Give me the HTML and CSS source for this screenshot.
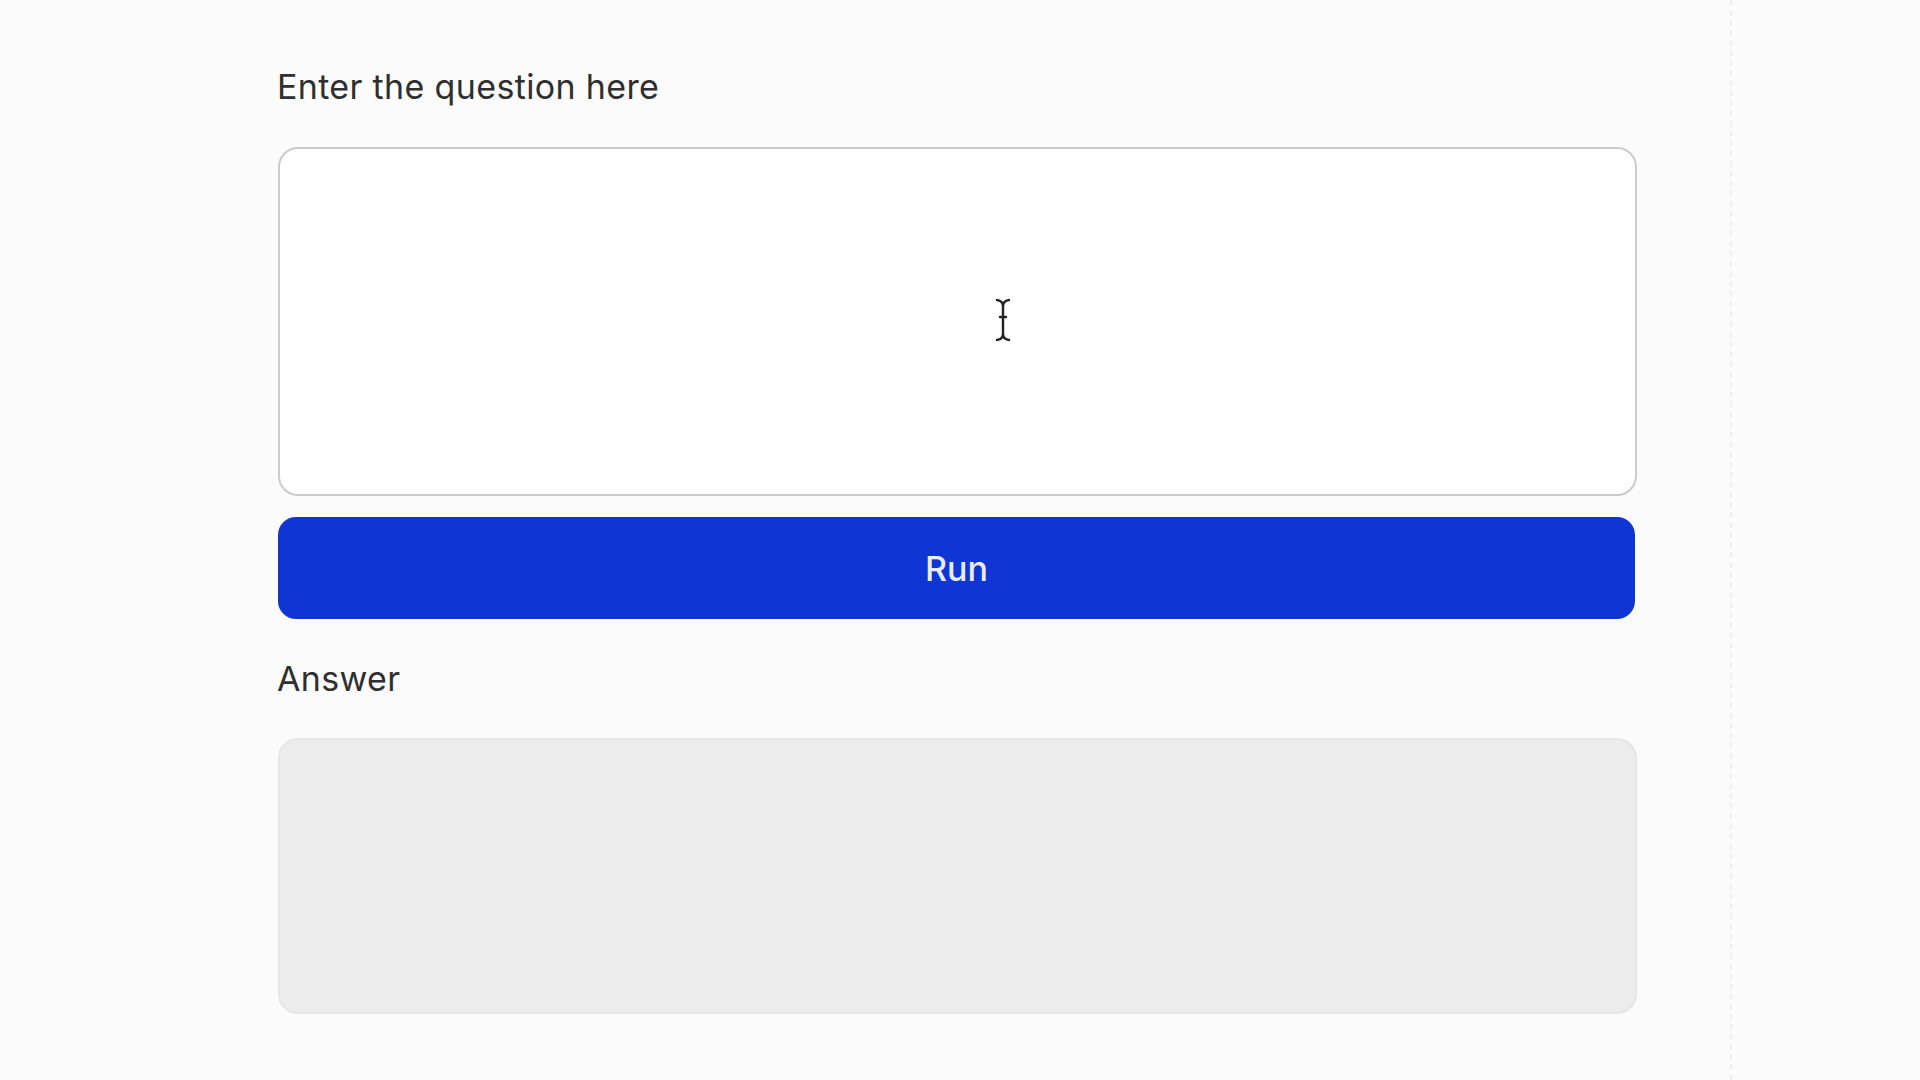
FILE: index.html
```html
<!DOCTYPE html>
<html>
<head>
<meta charset="utf-8">
<link rel="stylesheet" href="styles.css">
</head>
<body>
<div class="page">
  <main class="main">
    <label class="label label-q">Enter the question here</label>
    <div class="question-wrap">
      <textarea class="question"></textarea>
      <svg class="ibeam" width="16" height="44" viewBox="0 0 16 44">
        <path d="M2 2 Q8 3 8 8 L8 36 Q8 41 2 42 M14 2 Q8 3 8 8 M8 36 Q8 41 14 42 M5 19 L11 19" fill="none" stroke="#222" stroke-width="2.4" stroke-linecap="round"/>
      </svg>
    </div>
    <button class="run">Run</button>
    <label class="label label-a">Answer</label>
    <div class="answer"></div>
  </main>
  <aside class="side"></aside>
</div>
</body>
</html>
```
FILE: styles.css
```css
* { box-sizing: border-box; }
html, body { margin: 0; height: 100%; }
body {
  background: #fbfbfb;
  font-family: Inter, "Noto Sans", sans-serif;
  color: #2f2f2f;
}
.page {
  display: flex;
  height: 1080px;
}
.main {
  width: 1730px;
  padding: 67px 93px 0 277px;
  display: flex;
  flex-direction: column;
}
.side {
  flex: 1;
  border-left: 2px dashed #f0f0f0;
}
.label {
  font-size: 34px;
  line-height: 40px;
  font-weight: 400;
  display: block;
  letter-spacing: 0.35px;
}
.label-q { margin-bottom: 40px; }
.question-wrap {
  position: relative;
  margin-left: 1px;
}
.question {
  display: block;
  width: 1359px;
  height: 349px;
  border: 2px solid #cbcbcb;
  border-radius: 20px;
  background: #fff;
  resize: none;
  outline: none;
  font: inherit;
}
.ibeam {
  position: absolute;
  left: 717px;
  top: 151px;
}
.run {
  margin-top: 21px;
  margin-left: 1px;
  width: 1357px;
  height: 102px;
  border: none;
  border-radius: 18px;
  background: #0f35d4;
  color: #e8ecff;
  font-family: Inter, "Noto Sans", sans-serif;
  font-size: 34px;
  font-weight: 500;
  padding: 0;
}
.label-a { margin-top: 40px; margin-bottom: 39px; }
.answer {
  margin-left: 1px;
  width: 1359px;
  height: 276px;
  background: #ececec;
  border: 2px solid #e6e6e6;
  border-radius: 20px;
}
```
